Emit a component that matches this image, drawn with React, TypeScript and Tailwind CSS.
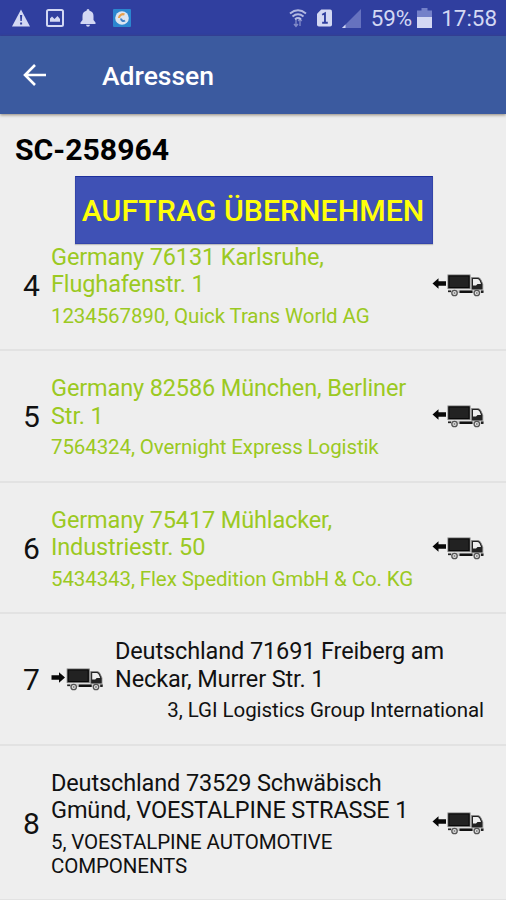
import React from 'react';
import { clsx } from 'clsx';

type Direction = 'out' | 'in';

interface Stop {
  position: number;
  address: string[];
  company: string[];
  direction: Direction;
  isOpen: boolean;
}

const stops: Stop[] = [
  {
    position: 4,
    address: ['Germany 76131 Karlsruhe,', 'Flughafenstr. 1'],
    company: ['1234567890, Quick Trans World AG'],
    direction: 'out',
    isOpen: true,
  },
  {
    position: 5,
    address: ['Germany 82586 München, Berliner', 'Str. 1'],
    company: ['7564324, Overnight Express Logistik'],
    direction: 'out',
    isOpen: true,
  },
  {
    position: 6,
    address: ['Germany 75417 Mühlacker,', 'Industriestr. 50'],
    company: ['5434343, Flex Spedition GmbH & Co. KG'],
    direction: 'out',
    isOpen: true,
  },
  {
    position: 7,
    address: ['Deutschland 71691 Freiberg am', 'Neckar, Murrer Str. 1'],
    company: ['3, LGI Logistics Group International'],
    direction: 'in',
    isOpen: false,
  },
  {
    position: 8,
    address: ['Deutschland 73529 Schwäbisch', 'Gmünd, VOESTALPINE STRASSE 1'],
    company: ['5, VOESTALPINE AUTOMOTIVE', 'COMPONENTS'],
    direction: 'out',
    isOpen: false,
  },
];

const TruckIcon: React.FC<{ direction: Direction }> = ({ direction }) => (
  <svg viewBox="0 0 52 24" className="h-6 w-[52px] shrink-0 overflow-visible" aria-hidden="true">
    {direction === 'out' ? (
      <path d="M.5 9.500 6.500 4.200V7.300H14v4.400H6.500v3.100z" fill="#080808" />
    ) : (
      <path d="M14 9.500 8 4.200V7.300H0.500v4.400H8v3.100z" fill="#080808" />
    )}
    <g transform={direction === 'in' ? 'translate(.7 0)' : 'translate(.5 0)'}>
      <rect x="15.500" y="1" width="22" height="13.500" fill="#222" stroke="#777" strokeWidth="1" />
      <rect x="16.500" y="2" width="20" height="11.500" fill="#222" stroke="#080808" strokeWidth="1" />
      <path d="M39 3.500h6.500q2 0 3 2.500l1.800 4v8H39z" fill="#222" stroke="#888" strokeWidth="0.800" />
      <path d="M40.500 5h4.500q1.400 0 2.200 1.800L48.500 10H45l-1.500 1.500h-3z" fill="#eee" />
      <path d="M15.500 15.500H50.500V19H15.500z" fill="#ccc" />
      <path d="M27 16.500h13V19H27z" fill="#111" />
      <path d="M15.500 16.500h3v1.500h-3zM48.500 16.500h2.500V19h-2.500z" fill="#222" />
      <circle cx="22" cy="19" r="2.700" fill="#e4e4e4" stroke="#555" strokeWidth="1.300" />
      <circle cx="44.300" cy="19" r="2.700" fill="#e4e4e4" stroke="#555" strokeWidth="1.300" />
      <circle cx="22" cy="19" r="1" fill="#888" />
      <circle cx="44.300" cy="19" r="1" fill="#888" />
    </g>
  </svg>
);

const StatusBar: React.FC = () => (
  <div className="flex h-9 shrink-0 items-center bg-[#303f9f] pl-3 pr-[9px] text-[#d3d8f3]">
    <svg viewBox="0 0 18 18" className="h-[18px] w-[18px]" aria-hidden="true">
      <path d="M9 .5 18 17.500H0z" fill="currentColor" />
      <path d="M8 6h2.200l-.4 6H8.400zM8.100 13.500h2v2h-2z" fill="#303f9f" />
    </svg>
    <svg viewBox="0 0 18 18" className="ml-4 h-[18px] w-[18px]" aria-hidden="true">
      <rect x="1" y="1" width="16" height="16" rx="1.500" fill="none" stroke="currentColor" strokeWidth="2" />
      <path d="M4 12.800V9.500l2-2 2.500 2.500 3-3 2.500 3v2.800z" fill="currentColor" />
    </svg>
    <svg viewBox="0 0 16 18" className="ml-4 h-[18px] w-4" aria-hidden="true">
      <path
        d="M8 0q1.500 0 1.500 1.700 4 1 4 5.300v4l2 2.500V15H.5v-1.500l2-2.500V7q0-4.300 4-5.300Q6.500 0 8 0zM6 15.800h4Q9.800 17.800 8 17.800T6 15.800z"
        fill="currentColor"
      />
    </svg>
    <svg viewBox="0 0 18 18" className="ml-[17px] h-[18px] w-[18px]" aria-hidden="true">
      <rect width="18" height="18" rx="1" fill="#2b86cf" />
      <circle cx="9" cy="9" r="6.800" fill="#dce5f1" />
      <path d="M11.500 5.500A4 4 0 0 0 6 9" fill="none" stroke="#e7a04c" strokeWidth="2.200" />
      <path d="M8 9.500a2.500 2.500 0 0 0 4 2" fill="none" stroke="#3f7fc4" strokeWidth="2" />
    </svg>

    <div className="ml-auto flex items-center">
      <svg viewBox="0 0 18 20" className="h-5 w-[18px]" fill="none" stroke="currentColor" aria-hidden="true">
        <path d="M1 5.500q8-6.500 16 0M3.500 8.500q5.500-4.500 11 0M6 11.200q3-2.400 6 0" strokeWidth="1.900" opacity=".8" />
        <path d="M7 11v7M5 16l2 2.500L9 16M11 18v-7M9.200 13l1.800-2.500 1.800 2.500" strokeWidth="1.300" opacity=".5" />
      </svg>
      <svg viewBox="0 0 16 18" className="ml-2.5 h-[18px] w-[15px]" aria-hidden="true">
        <path d="M4.500 0H14q2 0 2 2v14q0 2-2 2H2q-2 0-2-2V4.500z" fill="currentColor" />
        <path d="M5.500 5.500 8.500 4v10M5.500 14h6" fill="none" stroke="#303f9f" strokeWidth="2" />
      </svg>
      <svg viewBox="0 0 19 19" className="ml-2.5 h-[19px] w-[19px]" aria-hidden="true">
        <path d="M19 0v19H0z" fill="#6672bf" />
        <path d="M3.500 15.500V19H0z" fill="currentColor" />
      </svg>
      <span className="ml-2.5 text-[22.4px] leading-none">59%</span>
      <svg viewBox="0 0 15 20" className="ml-[5px] h-5 w-[15px]" aria-hidden="true">
        <path d="M4.500 0h6v2.500H15V9H0V2.500h4.500z" fill="#7481c9" />
        <path d="M0 9h15v11H0z" fill="currentColor" />
      </svg>
      <span className="ml-[9px] text-[22.4px] leading-none">17:58</span>
    </div>
  </div>
);

const AppBar: React.FC = () => (
  <header className="relative flex h-[78px] shrink-0 items-center bg-[#3b5a9f] shadow-[0_1px_3px_rgba(80,65,40,0.6)]">
    <button type="button" aria-label="Zurück" className="ml-[23px] text-white">
      <svg viewBox="0 0 24 24" className="h-6 w-6" fill="none" stroke="currentColor" strokeWidth="2.600" aria-hidden="true">
        <path d="M12 2 2 12l10 10M2 12h21" />
      </svg>
    </button>
    <h1 className="ml-[55px] pt-[3px] text-[26.5px] font-medium leading-none text-white">Adressen</h1>
  </header>
);

const StopRow: React.FC<{ stop: Stop }> = ({ stop }) => {
  const isPickup = stop.direction === 'in';

  return (
    <li className="flex items-center border-b-2 border-[#e2e2e2] pb-[21.5px] pl-[23px] pr-[22px] pt-6">
      <span className="w-7 shrink-0 text-[30px] leading-none">{stop.position}</span>
      {isPickup && <TruckIcon direction="in" />}
      <div className={clsx('grow whitespace-nowrap', isPickup && 'pl-3', stop.isOpen && 'text-[#9bc922]')}>
        <p className="text-[23.5px] leading-[27.5px] tracking-[-0.13px]">
          {stop.address.map((line) => (
            <span key={line} className="block">{line}</span>
          ))}
        </p>
        <p className={clsx('mt-[5px] text-[20.5px] leading-6', isPickup ? 'text-right tracking-[-0.05px]' : 'tracking-[-0.11px]')}>
          {stop.company.map((line) => (
            <span key={line} className="block">{line}</span>
          ))}
        </p>
      </div>
      {!isPickup && <TruckIcon direction="out" />}
    </li>
  );
};

export default function App() {
  return (
    <div className="flex h-[900px] w-[506px] flex-col overflow-hidden bg-[#eee] font-['Roboto',sans-serif] text-[#111]">
      <StatusBar />
      <AppBar />
      <main className="relative shrink-0">
        <h2 className="h-[105.6px] pl-[15px] pt-[13px] text-[30.2px] font-bold text-black">SC-258964</h2>
        <ul>
          {stops.map((stop) => (
            <StopRow key={stop.position} stop={stop} />
          ))}
        </ul>
        <button
          type="button"
          className="absolute left-[75px] top-[62px] flex h-[68px] w-[358px] items-center justify-center whitespace-nowrap border border-[#3445aa] border-t-[#1c2f9c] bg-[#3f51b5] pr-0.5 pt-0.5 text-[30.3px] font-medium text-[#ffff0a] shadow-[0_1px_1px_rgba(0,0,0,0.2)]"
        >
          AUFTRAG ÜBERNEHMEN
        </button>
      </main>
    </div>
  );
}
